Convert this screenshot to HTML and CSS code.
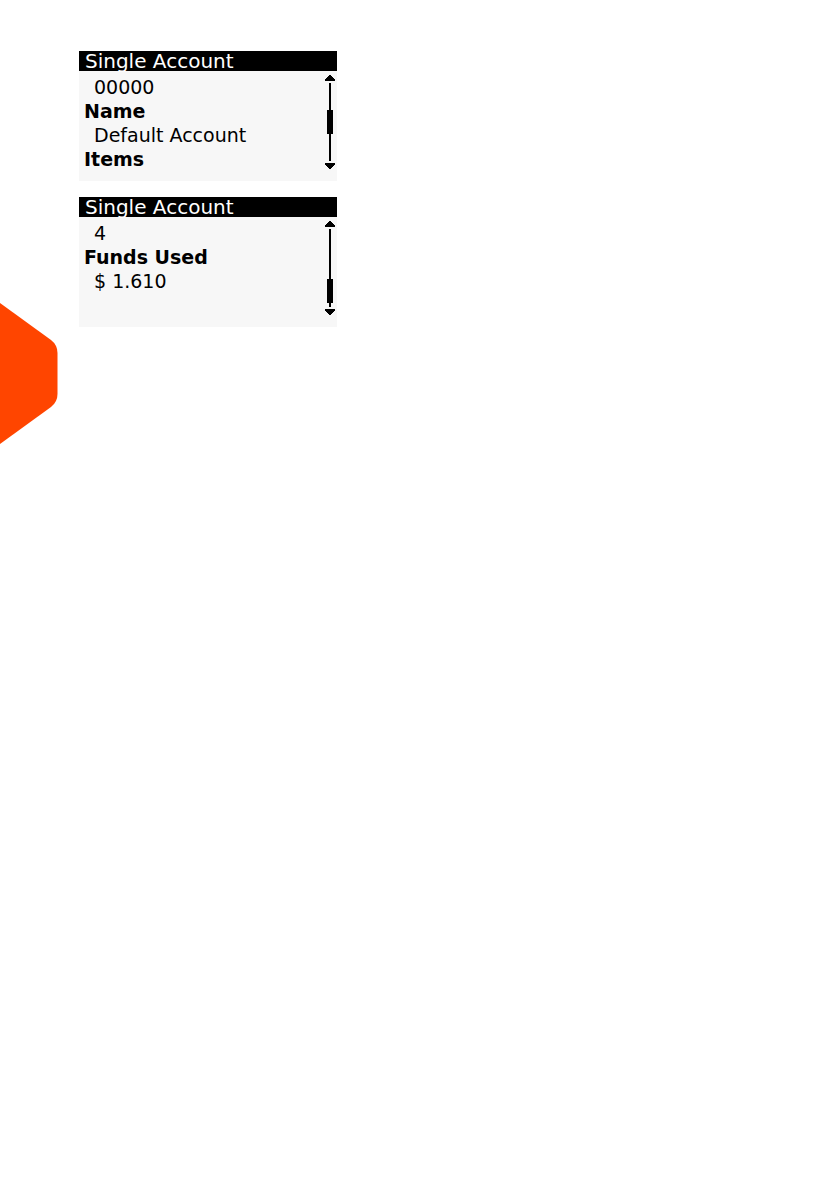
FILE: index.html
```
<!DOCTYPE html>
<html lang="en">
  <head>
    <meta charset="UTF-8" />
    <meta name="viewport" content="width=device-width, initial-scale=1.0" />
    <title>Single Account</title>
    <link rel="stylesheet" href="styles.css">
  </head>
  <body>
    <aside class="chapter">
      <svg class="chapter-tab" viewBox="0 0 58 142" aria-hidden="true">
        <path d="M0 0 L51 37 Q57.500 42 57.500 50 V91 Q57.500 99 51 104 L0 141 Z" />
      </svg>
    </aside>

    <main class="screens">
      <section class="screen">
        <h2>Single Account</h2>
        <div class="screen-body">
          <dl>
            <dd>00000</dd>
            <dt>Name</dt>
            <dd>Default Account</dd>
            <dt>Items</dt>
          </dl>
          <svg class="scroll" viewBox="0 0 12 94" shape-rendering="crispEdges" aria-hidden="true">
            <path d="M5 0 H7 V1 H8 V2 H9 V3 H10 V4 H11 V6 H1 V4 H2 V3 H3 V2 H4 V1 H5 Z" />
            <path d="M5 8 H7 V86 H5 Z" />
            <path d="M3 35 H9 V59 H3 Z" />
            <path d="M1 88 H11 V90 H10 V91 H9 V92 H8 V93 H7 V94 H5 V93 H4 V92 H3 V91 H2 V90 H1 Z" />
          </svg>
        </div>
      </section>

      <section class="screen">
        <h2>Single Account</h2>
        <div class="screen-body">
          <dl>
            <dd>4</dd>
            <dt>Funds Used</dt>
            <dd>$ 1.610</dd>
          </dl>
          <svg class="scroll" viewBox="0 0 12 94" shape-rendering="crispEdges" aria-hidden="true">
            <path d="M5 0 H7 V1 H8 V2 H9 V3 H10 V4 H11 V6 H1 V4 H2 V3 H3 V2 H4 V1 H5 Z" />
            <path d="M5 8 H7 V86 H5 Z" />
            <path d="M3 58 H9 V82 H3 Z" />
            <path d="M1 88 H11 V90 H10 V91 H9 V92 H8 V93 H7 V94 H5 V93 H4 V92 H3 V91 H2 V90 H1 Z" />
          </svg>
        </div>
      </section>
    </main>
  </body>
</html>
```
FILE: styles.css
```
body {
  margin: 0;
  min-height: 100vh;
  display: flex;
  align-items: flex-start;
  gap: 21px;
  background-color: #ffffff;
  color: #000000;
  font-family: "DejaVu Sans", Verdana, sans-serif;
  font-size: 19px;
}
.chapter {
  padding-top: 303px;
}
.chapter-tab {
  display: block;
  width: 58px;
  fill: #ff4500;
}
.screens {
  display: grid;
  gap: 16px;
  padding: 51px 0;
}
.screen {
  width: 258px;
  background-color: #f7f7f7;
}
.screen h2 {
  margin: 0;
  padding-left: 6px;
  background-color: #000000;
  color: #ffffff;
  font-size: 20px;
  font-weight: 400;
  line-height: 20px;
}
.screen-body {
  display: flex;
  justify-content: space-between;
  align-items: flex-start;
  min-height: 106px;
  padding: 4px 1px 0 5px;
}
dl {
  margin: 0;
  line-height: 24px;
}
dt {
  font-weight: 700;
}
dd {
  margin: 0 0 0 10px;
}
.scroll {
  width: 12px;
  height: 94px;
}
```
